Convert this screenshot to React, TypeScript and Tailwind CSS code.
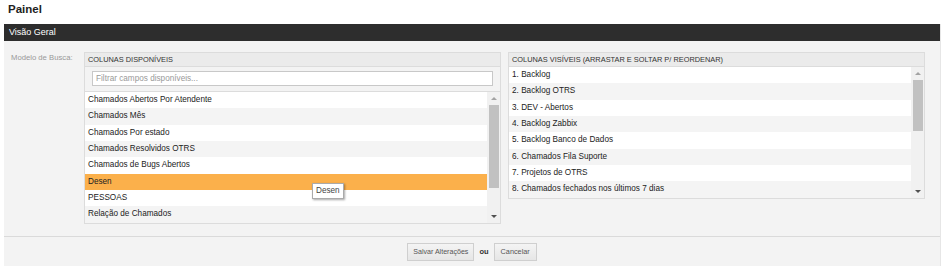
import React from "react";

const available = [
  "Chamados Abertos Por Atendente",
  "Chamados Mês",
  "Chamados Por estado",
  "Chamados Resolvidos OTRS",
  "Chamados de Bugs Abertos",
  "Desen",
  "PESSOAS",
  "Relação de Chamados",
];

const visible = [
  "Backlog",
  "Backlog OTRS",
  "DEV - Abertos",
  "Backlog Zabbix",
  "Backlog Banco de Dados",
  "Chamados Fila Suporte",
  "Projetos de OTRS",
  "Chamados fechados nos últimos 7 dias",
];

function ScrollBar({ thumbTop, thumbHeight }: { thumbTop: string; thumbHeight: string }) {
  return (
    <div className="w-[13px] h-full bg-[#f1f1f1] flex flex-col items-center relative">
      <div className="h-[13px] flex items-center justify-center">
        <div className="w-0 h-0 border-l-[3px] border-r-[3px] border-b-[3px] border-l-transparent border-r-transparent border-b-[#a3a3a3]" />
      </div>
      <div className={`absolute left-[2px] w-[10px] bg-[#c1c1c1] ${thumbTop} ${thumbHeight}`} />
      <div className="mt-auto h-[13px] flex items-center justify-center">
        <div className="w-0 h-0 border-l-[3px] border-r-[3px] border-t-[3px] border-l-transparent border-r-transparent border-t-[#505050]" />
      </div>
    </div>
  );
}

export default function App() {
  return (
    <div className="w-[945px] h-[266px] bg-white overflow-hidden font-['Liberation_Sans',Arial,sans-serif] text-[#222]">
      <h1 className="pl-[8px] pt-[2px] h-[24px] text-[11.5px] font-bold leading-[14px] text-[#222]">Painel</h1>
      <div className="ml-[4px] w-[937px] h-[242px] bg-[#f3f3f3] border-r border-[#e6e6e6]">
        <div className="h-[17px] bg-[#2d2d2d] text-white text-[9px] leading-[17px] pl-[5px]">Visão Geral</div>

        <div className="flex h-[195px] pt-[11px]">
          <div className="w-[80px] pl-[7px] pt-[1px] text-[7.7px] text-[#999] leading-[10px]">Modelo de Busca:</div>

          {/* colunas disponíveis */}
          <div className="relative w-[417px] h-[172px] border border-[#dcdcdc] bg-[#f3f3f3] flex flex-col">
            <div className="h-[14px] bg-[#ebebeb] border-b border-[#dcdcdc] pl-[3px] text-[7.4px] leading-[13px] text-[#333]">
              COLUNAS DISPONÍVEIS
            </div>
            <div className="h-[25px] px-[7px] pt-[4px] border-b border-[#dcdcdc]">
              <div className="h-[15px] bg-white border border-[#c8c8c8] pl-[3px] text-[8.2px] leading-[13px] text-[#999]">
                Filtrar campos disponíveis...
              </div>
            </div>
            <div className="flex h-[131px]">
              <div className="flex-1">
                {available.map((name, i) => (
                  <div
                    key={name}
                    className={`h-[16.35px] pl-[3px] text-[8.2px] leading-[16px] ${
                      name === "Desen" ? "bg-[#fbb04b]" : i % 2 === 0 ? "bg-white" : "bg-[#f4f4f4]"
                    }`}
                  >
                    {name}
                  </div>
                ))}
              </div>
              <ScrollBar thumbTop="top-[13px]" thumbHeight="h-[83px]" />
            </div>
            <div className="absolute left-[227px] top-[130px] h-[16px] px-[3px] bg-white border border-[#aaa] shadow-[1px_1px_2px_rgba(0,0,0,0.35)] text-[8.2px] leading-[14px] text-[#444]">
              Desen
            </div>
          </div>

          {/* colunas visíveis */}
          <div className="ml-[7px] w-[417px] h-[147px] border border-[#dcdcdc] flex flex-col">
            <div className="h-[14px] bg-[#ebebeb] border-b border-[#dcdcdc] pl-[3px] text-[7.4px] leading-[13px] text-[#333]">
              COLUNAS VISÍVEIS (ARRASTAR E SOLTAR P/ REORDENAR)
            </div>
            <div className="flex h-[131px]">
              <div className="flex-1">
                {visible.map((name, i) => (
                  <div
                    key={name}
                    className={`h-[16.35px] pl-[3px] text-[8.2px] leading-[16px] ${i % 2 === 0 ? "bg-white" : "bg-[#f4f4f4]"}`}
                  >
                    {i + 1}. {name}
                  </div>
                ))}
              </div>
              <ScrollBar thumbTop="top-[13px]" thumbHeight="h-[51px]" />
            </div>
          </div>
        </div>

        <div className="border-t border-[#dadada] h-[29px] flex justify-center items-start pt-[6px]">
          <button className="h-[18px] px-[5px] bg-gradient-to-b from-[#f4f4f4] to-[#e6e6e6] border border-[#cfcfcf] text-[7.1px] text-[#555] leading-[16px]">
            Salvar Alterações
          </button>
          <span className="mx-[5px] text-[7.5px] font-bold text-[#333] leading-[18px]">ou</span>
          <button className="h-[18px] px-[6px] bg-gradient-to-b from-[#f4f4f4] to-[#e6e6e6] border border-[#cfcfcf] text-[7.3px] text-[#555] leading-[16px]">
            Cancelar
          </button>
        </div>
      </div>
    </div>
  );
}
